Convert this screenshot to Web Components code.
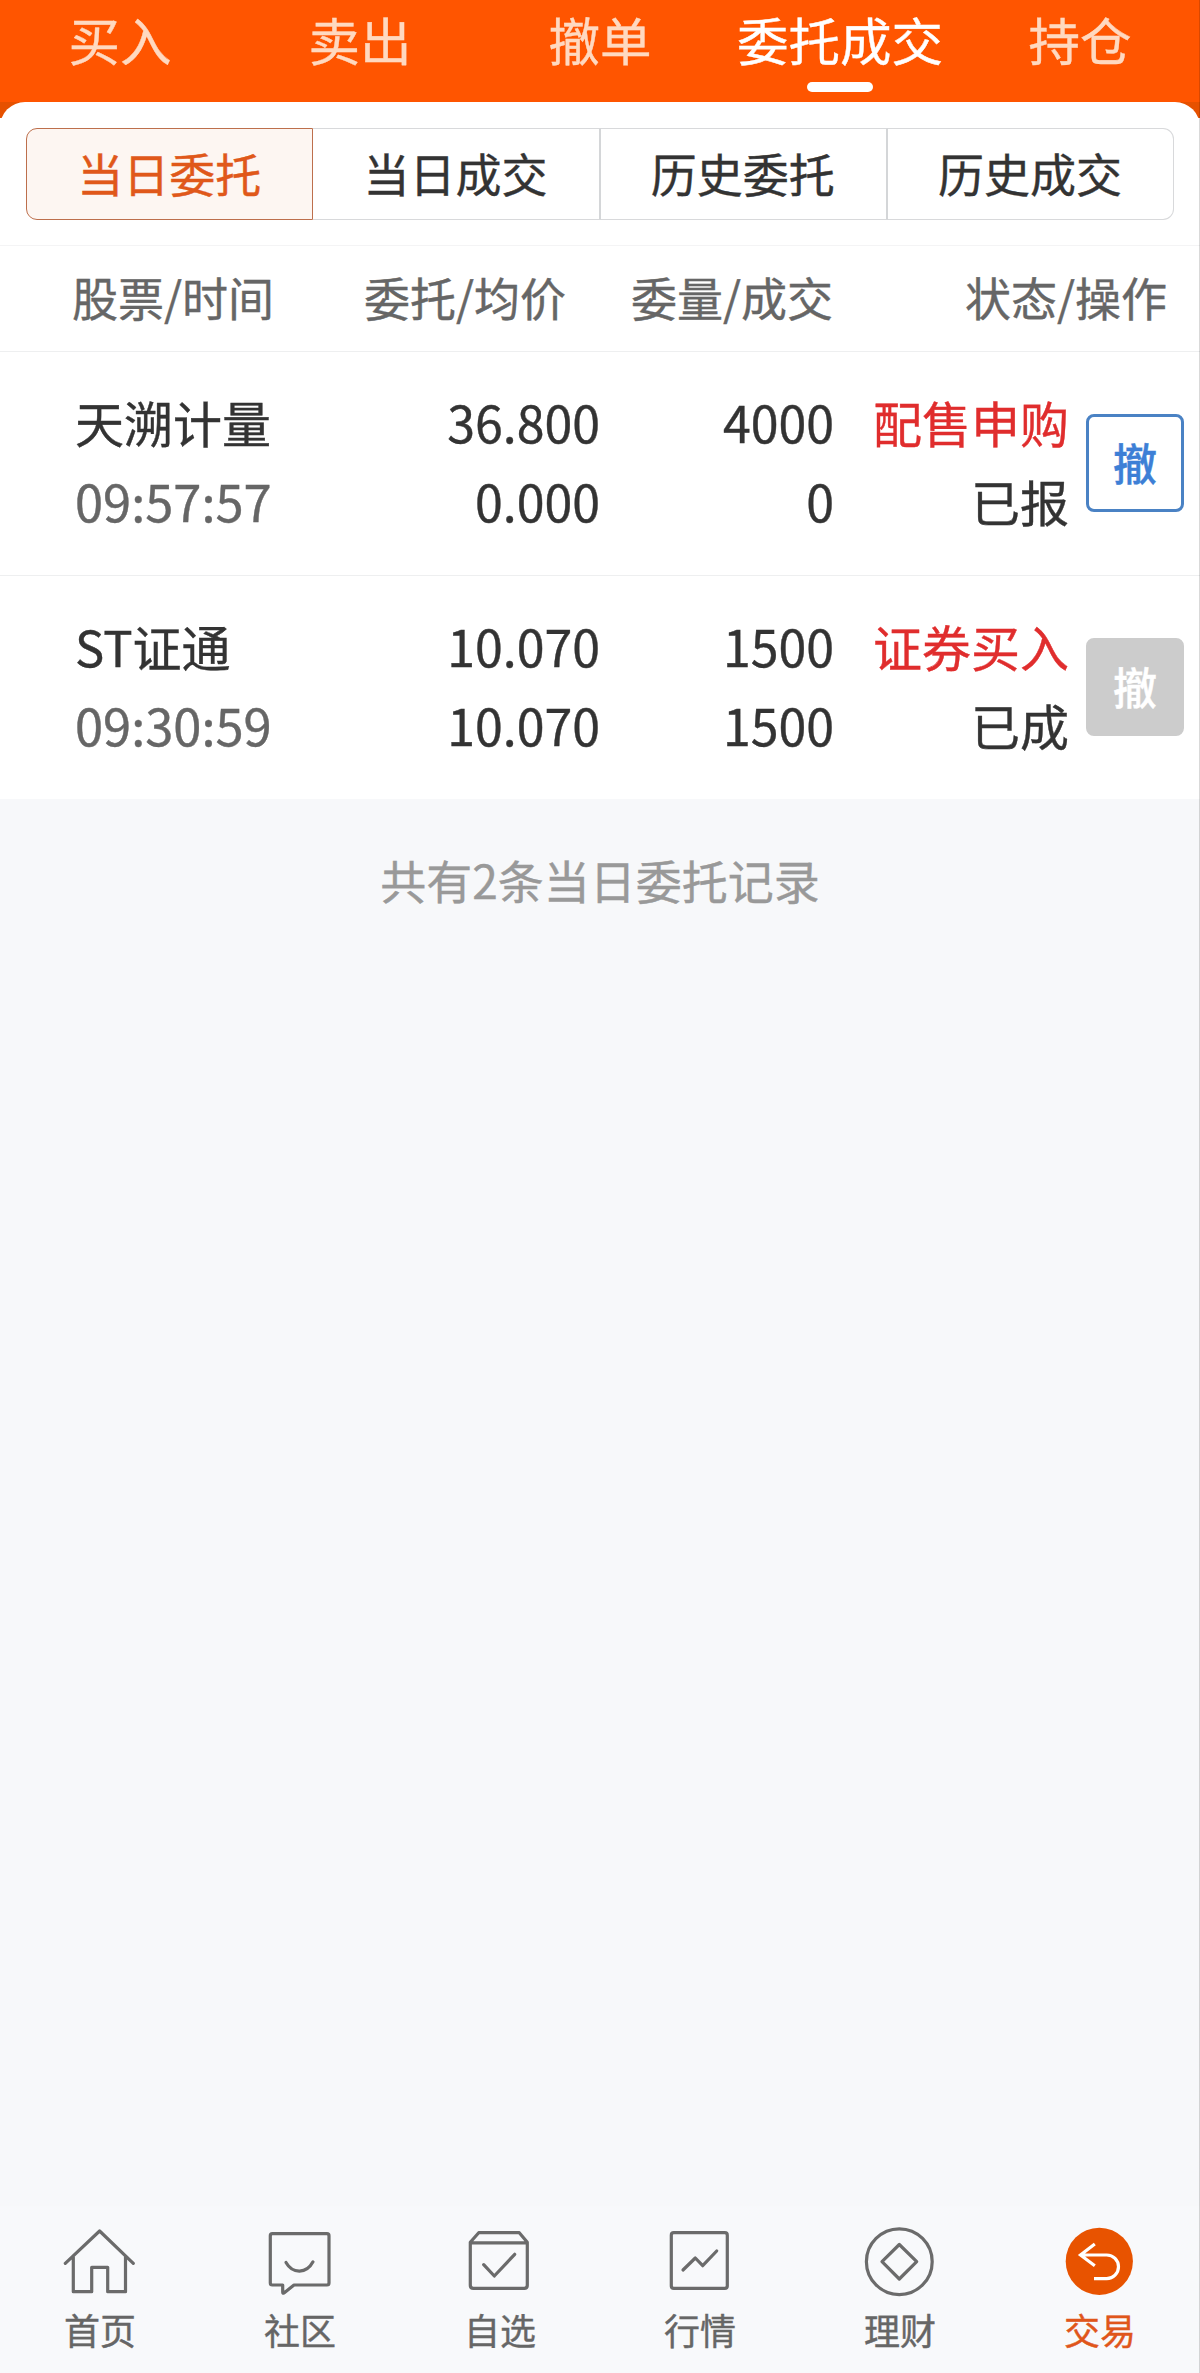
<!DOCTYPE html>
<html lang="zh-CN">
<head>
<meta charset="utf-8">
<title>委托成交</title>
<style>
  body {
    margin: 0;
    background: #f7f8fa;
    font-family: "Noto Sans CJK SC", sans-serif;
    color: #333;
    -webkit-text-stroke: .4px;
  }
</style>
</head>
<body>
<trade-app></trade-app>

<script>
class TradeTab extends HTMLElement {
  constructor () {
    super()
    this.attachShadow({ mode: 'open' }).innerHTML =
      /* html */`
        <style>
          :host {
            position: relative;
            flex: 1;
            height: 102px;
            line-height: 77px;
            font-size: 51.5px;
            text-align: center;
            white-space: nowrap;
            color: #ffd9c0;
          }
          :host([active]) { color: #fff }
          :host([active])::after {
            content: '';
            position: absolute;
            left: 50%;
            bottom: 10px;
            width: 66px;
            height: 10px;
            margin-left: -33px;
            border-radius: 5px;
            background: #fff;
          }
        </style>
        <slot></slot>
      `
  }
}
customElements.define('trade-tab', TradeTab)

class TradeHeader extends HTMLElement {
  constructor () {
    super()
    this.attachShadow({ mode: 'open' }).innerHTML =
      /* html */`
        <style>
          :host {
            display: flex;
            background: #ff5500;
          }
        </style>
        <slot></slot>
      `
  }
}
customElements.define('trade-header', TradeHeader)

class SegmentItem extends HTMLElement {
  constructor () {
    super()
    this.attachShadow({ mode: 'open' }).innerHTML =
      /* html */`
        <style>
          :host {
            flex: 1;
            box-sizing: border-box;
            height: 92px;
            border: 1px solid #d8d9db;
            border-left-width: 0;
            line-height: 87px;
            font-size: 46px;
            text-align: center;
            text-indent: -1px;
          }
          :host(:not(:last-child)) { border-right: 2px solid #d4d6d8 }
          :host(:first-child) { border-radius: 11px 0 0 11px }
          :host(:last-child) { border-radius: 0 11px 11px 0 }
          :host([active]) {
            border: 1px solid #bd6f4c !important;
            background: #fdf6f2;
            color: #e0581a;
          }
        </style>
        <slot></slot>
      `
  }
}
customElements.define('segment-item', SegmentItem)

class SegmentBar extends HTMLElement {
  constructor () {
    super()
    this.attachShadow({ mode: 'open' }).innerHTML =
      /* html */`
        <style>
          :host {
            display: block;
            background: linear-gradient(#e65100 16px, #fff 16px);
          }
          .inner {
            display: flex;
            padding: 26px 26px 25px;
            border-bottom: 1px solid #f4f4f5;
            border-radius: 25px 25px 0 0;
            background: #fff;
          }
        </style>
        <div class="inner"><slot></slot></div>
      `
  }
}
customElements.define('segment-bar', SegmentBar)

class OrderHead extends HTMLElement {
  constructor () {
    super()
    this.attachShadow({ mode: 'open' }).innerHTML =
      /* html */`
        <style>
          :host {
            display: grid;
            grid-template-columns: 274px 292px 267px 1fr;
            box-sizing: border-box;
            height: 106px;
            padding-right: 33px;
            border-bottom: 1px solid #eeeff0;
            background: #fff;
            line-height: 101px;
            font-size: 46px;
            text-align: right;
            color: #666;
          }
        </style>
        <slot></slot>
      `
  }
}
customElements.define('order-head', OrderHead)

class OrderRow extends HTMLElement {
  connectedCallback () {
    const get = name => this.getAttribute(name)
    this.attachShadow({ mode: 'open' }).innerHTML =
      /* html */`
        <style>
          :host {
            display: grid;
            grid-template-columns: 281px 244px 234px 235px 98px;
            box-sizing: border-box;
            height: 224px;
            padding: 30px 0 0 75px;
            border-bottom: 1px solid #eeeff0;
            background: #fff;
            font-size: 49px;
            line-height: 79px;
            white-space: nowrap;
          }
          :host(:last-of-type) {
            height: 223px;
            border-bottom: 0;
          }
          .time { font-size: 50.6px }
          .num { font-size: 50px }
          .num, .status { text-align: right }
          .time { color: #666 }
          .side { color: #e02d2d }
          button {
            box-sizing: border-box;
            width: 98px;
            height: 98px;
            margin: 32px 0 0 17px;
            padding: 0 0 2px;
            border: 3px solid #4a82c4;
            border-radius: 8px;
            background: #fff;
            font: 500 44px/88px "Noto Sans CJK SC", sans-serif;
            color: #3d7fd6;
          }
          button:disabled {
            border-color: #ccc;
            background: #ccc;
            color: #fff;
          }
        </style>
        <div><div>${get('name')}</div><div class="time">${get('time')}</div></div>
        <div class="num"><div>${get('price')}</div><div>${get('average')}</div></div>
        <div class="num"><div>${get('amount')}</div><div>${get('filled')}</div></div>
        <div class="status"><div class="side">${get('side')}</div><div>${get('status')}</div></div>
        <button ${this.hasAttribute('done') ? 'disabled' : ''}>撤</button>
      `
  }
}
customElements.define('order-row', OrderRow)

const icons = {
  home: '<path d="M5.3 41.3 39.6 9 73.3 41.3M13.3 35v34.7h18.4V45.3h16v24.4h17.8V35"/>',
  chat: '<path d="M12.3 11.7H67q2 0 2 2V61q0 2-2 2H34l-10 8q-1.3.8-1.3-1V63H12.3q-2 0-2-2V13.7q0-2 2-2Z"/><path d="M26 40.5C32.5 52 46.5 52 53 39.8"/>',
  pick: '<path d="M10.3 20.3 18.7 10.7H59.3L67.3 20.3V63.3q0 3-3 3H13.3q-3 0-3-3ZM10.3 20.8H67.3M23.7 42.7 34.3 54 54.7 32.3"/>',
  chart: '<rect x="11.3" y="10.7" width="56" height="55.6" rx="2.5"/><path d="M23 48 35.3 36 42.7 43.7 56.7 29"/>',
  coin: '<circle cx="39.3" cy="39.7" r="32.9"/><path d="M39.3 22.5 56.7 39.7 39.3 57 22 39.7Z"/>',
  trade: '<circle cx="39.3" cy="39.3" r="33.6" fill="#e85300" stroke="none"/><path stroke="#fff" stroke-linecap="butt" stroke-linejoin="miter" d="M34.8 22 20.5 33 34.8 43.7M20.5 33H46.7a11.8 11.8 0 0 1 0 23.6H34"/>'
}

class NavItem extends HTMLElement {
  connectedCallback () {
    this.attachShadow({ mode: 'open' }).innerHTML =
      /* html */`
        <style>
          :host {
            display: flex;
            flex: 1;
            flex-direction: column;
            align-items: center;
            font-size: 36px;
            line-height: 54px;
            color: #666;
          }
          :host([active]) { color: #e0561b }
          svg {
            width: 80px;
            height: 80px;
            fill: none;
            stroke: #6b6b6b;
            stroke-width: 3.2;
            stroke-linecap: round;
            stroke-linejoin: round;
          }
        </style>
        <svg viewBox="0 0 80 80">${icons[this.getAttribute('icon')]}</svg>
        <slot></slot>
      `
  }
}
customElements.define('nav-item', NavItem)

class BottomNav extends HTMLElement {
  constructor () {
    super()
    this.attachShadow({ mode: 'open' }).innerHTML =
      /* html */`
        <style>
          :host {
            display: flex;
            box-sizing: border-box;
            height: 167px;
            padding-top: 16px;
            background: #f8f9fb;
          }
        </style>
        <slot></slot>
      `
  }
}
customElements.define('bottom-nav', BottomNav)

class TradeApp extends HTMLElement {
  constructor () {
    super()
    this.attachShadow({ mode: 'open' }).innerHTML =
      /* html */`
        <style>
          :host {
            position: relative;
            display: flex;
            flex-direction: column;
            height: 2373px;
            overflow: hidden;
          }
          :host::after {
            content: '';
            position: absolute;
            top: 0;
            right: 0;
            width: 1px;
            height: 100%;
            background: rgba(0, 0, 0, .15);
          }
          main { flex: 1 }
          .total {
            margin: 0;
            padding-top: 46px;
            font-size: 46px;
            line-height: 68px;
            text-align: center;
            color: #999;
          }
        </style>
        <trade-header>
          <trade-tab>买入</trade-tab>
          <trade-tab>卖出</trade-tab>
          <trade-tab>撤单</trade-tab>
          <trade-tab active>委托成交</trade-tab>
          <trade-tab>持仓</trade-tab>
        </trade-header>
        <segment-bar>
          <segment-item active>当日委托</segment-item>
          <segment-item>当日成交</segment-item>
          <segment-item>历史委托</segment-item>
          <segment-item>历史成交</segment-item>
        </segment-bar>
        <order-head>
          <span>股票/时间</span>
          <span>委托/均价</span>
          <span>委量/成交</span>
          <span>状态/操作</span>
        </order-head>
        <main>
          <order-row name="天溯计量" time="09:57:57" price="36.800" average="0.000"
            amount="4000" filled="0" side="配售申购" status="已报"></order-row>
          <order-row name="ST证通" time="09:30:59" price="10.070" average="10.070"
            amount="1500" filled="1500" side="证券买入" status="已成" done></order-row>
          <p class="total">共有2条当日委托记录</p>
        </main>
        <bottom-nav>
          <nav-item icon="home">首页</nav-item>
          <nav-item icon="chat">社区</nav-item>
          <nav-item icon="pick">自选</nav-item>
          <nav-item icon="chart">行情</nav-item>
          <nav-item icon="coin">理财</nav-item>
          <nav-item icon="trade" active>交易</nav-item>
        </bottom-nav>
      `
  }
}
customElements.define('trade-app', TradeApp)
</script>
</body>
</html>
